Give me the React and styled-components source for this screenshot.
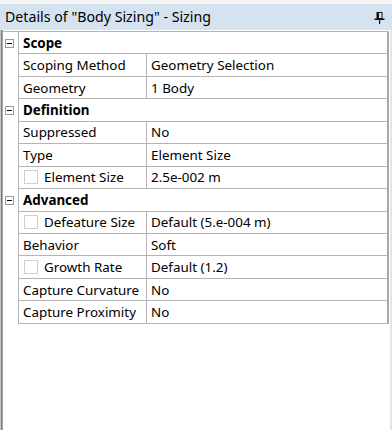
import React from 'react';
import styled, { createGlobalStyle } from 'styled-components';

const GlobalStyle = createGlobalStyle`
  html, body {
    margin: 0;
    padding: 0;
    background: #ffffff;
  }
`;

const sections = [
  {
    title: 'Scope',
    rows: [
      { name: 'Scoping Method', value: 'Geometry Selection' },
      { name: 'Geometry', value: '1 Body' },
    ],
  },
  {
    title: 'Definition',
    rows: [
      { name: 'Suppressed', value: 'No' },
      { name: 'Type', value: 'Element Size' },
      { name: 'Element Size', value: '2.5e-002 m', check: true },
    ],
  },
  {
    title: 'Advanced',
    rows: [
      { name: 'Defeature Size', value: 'Default (5.e-004 m)', check: true },
      { name: 'Behavior', value: 'Soft' },
      { name: 'Growth Rate', value: 'Default (1.2)', check: true },
      { name: 'Capture Curvature', value: 'No' },
      { name: 'Capture Proximity', value: 'No' },
    ],
  },
];

const PinIcon = () => (
  <svg width="11" height="12" viewBox="0 0 11 12">
    <rect x="3" y="0.5" width="5" height="6" fill="none" stroke="#111" strokeWidth="1" />
    <rect x="3" y="0" width="2" height="7" fill="#111" />
    <rect x="0.5" y="6.5" width="10" height="1.5" fill="#111" />
    <rect x="5" y="8" width="1.2" height="4" fill="#111" />
  </svg>
);

const App = () => {
  return (
    <>
      <GlobalStyle />
      <Panel>
        <TopStrip />
        <TitleBar>
          <Title>Details of "Body Sizing" - Sizing</Title>
          <PinButton>
            <PinIcon />
          </PinButton>
        </TitleBar>
        <Body>
          <Grid>
            {sections.map((s) => (
              <React.Fragment key={s.title}>
                <Row>
                  <Expander>
                    <MinusBox />
                  </Expander>
                  <CategoryCell>{s.title}</CategoryCell>
                </Row>
                {s.rows.map((r) => (
                  <Row key={r.name}>
                    <Expander />
                    <NameCell>
                      {r.check && <CheckBox />}
                      {r.name}
                    </NameCell>
                    <ValueCell>{r.value}</ValueCell>
                  </Row>
                ))}
              </React.Fragment>
            ))}
          </Grid>
        </Body>
      </Panel>
    </>
  );
};

const Panel = styled.div`
  width: 392px;
  height: 430px;
  display: flex;
  flex-direction: column;
  font-family: "Noto Sans", "Open Sans", sans-serif;
  font-size: 13.4px;
  color: #000;
  overflow: hidden;
`;

const TopStrip = styled.div`
  height: 4px;
  background: #f4f4f4;
`;

const TitleBar = styled.div`
  height: 26px;
  background: #d5e2f0;
  display: flex;
  align-items: center;
  justify-content: space-between;
  padding: 0 7px 0 5px;
`;

const Title = styled.span`
  font-size: 14.2px;
  line-height: 26px;
  white-space: nowrap;
`;

const PinButton = styled.span`
  display: flex;
  align-items: center;
  margin-top: 1px;
`;

const Body = styled.div`
  flex: 1;
  background: #fff;
  border-left: 1px solid #c8c8c8;
  border-right: 2px solid #e4e4e4;
  box-shadow: inset 1px 0 0 #7c7c7c, inset 2px 0 0 #a8a8a8;
  padding: 1px 0 0 2px;
`;

const Grid = styled.div`
  width: 386px;
  border-top: 1px solid #b4b4b4;
  border-right: 2px solid #a8a8a8;
  box-sizing: border-box;
`;

const Row = styled.div`
  display: grid;
  grid-template-columns: 16px 128px 1fr;
  height: 22.45px;
`;

const Expander = styled.div`
  border-right: 1px solid #b4b4b4;
  display: flex;
  align-items: center;
  justify-content: center;
`;

const MinusBox = styled.div`
  width: 9px;
  height: 9px;
  box-sizing: border-box;
  border: 1px solid #9a9a9a;
  margin-right: 2px;
  position: relative;
  &::after {
    content: "";
    position: absolute;
    left: 1px;
    top: 3px;
    width: 5px;
    height: 1px;
    background: #000;
  }
`;

const Cell = styled.div`
  border-bottom: 1px solid #b4b4b4;
  display: flex;
  align-items: center;
  padding-left: 4px;
  white-space: nowrap;
  overflow: hidden;
`;

const CategoryCell = styled(Cell)`
  grid-column: span 2;
  font-weight: bold;
`;

const NameCell = styled(Cell)`
  border-right: 1px solid #b4b4b4;
`;

const ValueCell = styled(Cell)``;

const CheckBox = styled.span`
  width: 14px;
  height: 14px;
  box-sizing: border-box;
  border: 1px solid #cfcfcf;
  background: #fff;
  margin: 0 6px 0 1px;
`;

export default App;
